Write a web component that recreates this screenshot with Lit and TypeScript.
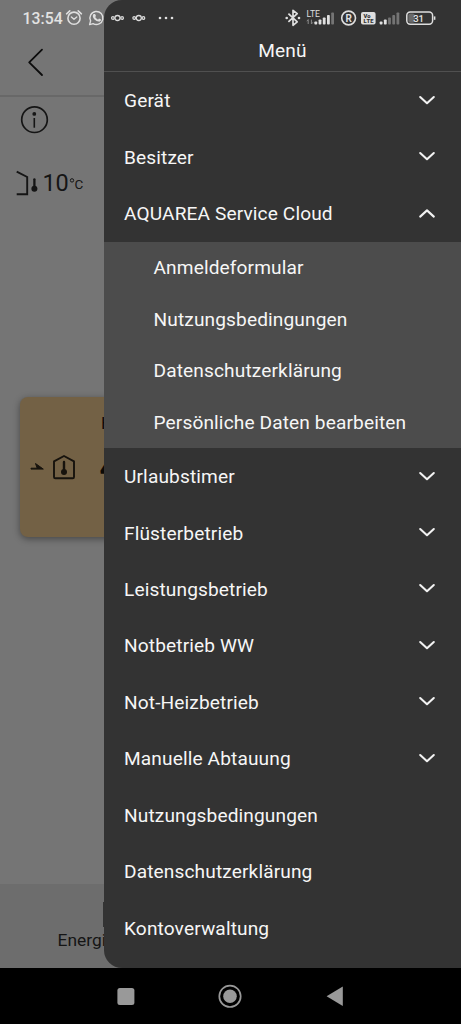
import { LitElement, html, svg, css } from "lit";
import { customElement, property } from "lit/decorators.js";

interface Entry {
  label: string;
  chevron?: "down" | "up";
  children?: string[];
}

const ENTRIES: Entry[] = [
  { label: "Gerät", chevron: "down" },
  { label: "Besitzer", chevron: "down" },
  {
    label: "AQUAREA Service Cloud",
    chevron: "up",
    children: ["Anmeldeformular", "Nutzungsbedingungen", "Datenschutzerklärung", "Persönliche Daten bearbeiten"],
  },
  { label: "Urlaubstimer", chevron: "down" },
  { label: "Flüsterbetrieb", chevron: "down" },
  { label: "Leistungsbetrieb", chevron: "down" },
  { label: "Notbetrieb WW", chevron: "down" },
  { label: "Not-Heizbetrieb", chevron: "down" },
  { label: "Manuelle Abtauung", chevron: "down" },
  { label: "Nutzungsbedingungen" },
  { label: "Datenschutzerklärung" },
  { label: "Kontoverwaltung" },
];

@customElement("status-bar")
export class StatusBar extends LitElement {
  static styles = css`
    :host { display: flex; height: 36px; }
    svg { display: block; width: 461px; height: 36px; font-family: Roboto, sans-serif; }
    .clock { font-size: 16.3px; font-weight: 500; fill: #e2e2e2; }
    .tiny { font-size: 8.8px; fill: #dedede; }
    .reg { font-size: 10px; font-weight: 700; fill: #dedede; }
    .volte { font-size: 5.8px; font-weight: 900; fill: #333; }
    .charge { font-size: 9.5px; font-weight: 500; fill: #e4e4e4; }
  `;

  private knot(x: number) {
    return svg`<g transform="translate(${x} 18)" fill="none" stroke="#dadada" stroke-width="1.3">
      <circle r="2.5"/><circle cx="-4.6" r="1.3"/><circle cx="4.6" r="1.3"/></g>`;
  }

  private bars(x: number, lit: number) {
    const heights = [3, 5, 7, 9.4, 12];
    return heights.map(
      (h, i) => svg`<rect x=${x + i * 4.2} y=${24.5 - h} width="2.8" height=${h} rx=".8" fill=${i < lit ? "#e0e0e0" : "#747474"}/>`
    );
  }

  render() {
    return html`<svg viewBox="0 0 461 36">
      <text class="clock" x="22.6" y="24" textLength="40" lengthAdjust="spacingAndGlyphs">13:54</text>
      <g fill="none" stroke="#dedede" stroke-width="1.6" stroke-linecap="round" stroke-linejoin="round">
        <circle cx="74" cy="18.2" r="6.1"/>
        <path d="M66.6 13.8l3.2-3M81.4 13.8l-3.2-3"/>
        <path d="M71.4 17l2.6 2.3 2.8-2.3" stroke-width="1.4"/>
        <path d="M89.6 24.6l1-3.7a6.5 6.5 0 1 1 2.5 2.7z" stroke-width="1.4"/>
      </g>
      <path d="M93.6 14.1l1.5-.2.9 2.1-.8 1.1c.7 1.3 1.5 2 2.8 2.6l1-1.1 2.1 1c0 1.5-1.4 2.2-2.4 2-3-.5-5.5-3-5.9-5.4 0-.8.2-1.5.8-2.1z" fill="#dedede"/>
      ${this.knot(117.5)}${this.knot(138.8)}
      <g fill="#e0e0e0"><circle cx="160" cy="18" r="1.3"/><circle cx="166" cy="18" r="1.3"/><circle cx="172" cy="18" r="1.3"/></g>
      <path d="M288.4 13.7l8.8 8.2-4.2 3.4V10.3l4.2 3.4-8.8 8.2" fill="none" stroke="#e0e0e0" stroke-width="1.7" stroke-linejoin="round"/>
      <circle cx="286.7" cy="18" r="1.3" fill="#e0e0e0"/><circle cx="299" cy="18" r="1.3" fill="#e0e0e0"/>
      <text class="tiny" x="306.4" y="16.9" textLength="13.6" lengthAdjust="spacingAndGlyphs">LTE</text>
      <path d="M308.2 24v-4.4m-1.4 1.6l1.4-1.6M311.4 19.6V24m1.4-1.6L311.4 24" fill="none" stroke="#8b8b8b" stroke-width="1"/>
      ${this.bars(314.4, 4)}
      <circle cx="348.6" cy="18" r="6.9" fill="none" stroke="#dedede" stroke-width="1.6"/>
      <text class="reg" x="348.7" y="21.6" text-anchor="middle">R</text>
      <rect x="361" y="12" width="14.6" height="12.6" rx="2" fill="#dedede"/>
      <text class="volte" x="363.6" y="17.9">Vo</text>
      <text class="volte" x="363.6" y="23.3" textLength="10">LTE</text>
      ${this.bars(379.7, 2)}
      <rect x="408.3" y="13.4" width="6.5" height="9.4" rx="2" fill="#686868"/>
      <rect x="406.8" y="12" width="25.8" height="12.2" rx="3.4" fill="none" stroke="#dedede" stroke-width="1.5"/>
      <path d="M434.6 16.4v3.4" stroke="#dedede" stroke-width="1.6"/>
      <text class="charge" x="418.6" y="21.5" text-anchor="middle">31</text>
    </svg>`;
  }
}

@customElement("menu-row")
export class MenuRow extends LitElement {
  @property() label = "";
  @property() chevron = "";

  static styles = css`
    :host { display: flex; align-items: center; justify-content: space-between; box-sizing: border-box; height: 56.45px; padding: 1.6px 25px 0 20px; }
    svg { display: block; width: 18px; height: 12px; margin-top: -1px; }
    .glyph { fill: none; stroke: #f2f2f2; stroke-width: 2.1; stroke-linecap: round; stroke-linejoin: round; }
  `;

  render() {
    return html`<span>${this.label}</span>
      ${this.chevron
        ? html`<svg viewBox="0 0 18 12"><path class="glyph" d=${this.chevron === "up" ? "M2.2 8.600l6.800-6.200 6.800 6.200" : "M2.2 2l6.800 6.200 6.800-6.200"} /></svg>`
        : ""}`;
  }
}

@customElement("side-menu")
export class SideMenu extends LitElement {
  static styles = css`
    :host {
      display: flex; flex-direction: column; box-sizing: border-box; overflow: hidden;
      background: #333; color: #f6f6f6; border-radius: 18px 0 0 18px;
      font: 400 19.1px/24px Roboto, sans-serif; letter-spacing: .13px; white-space: nowrap;
    }
    .title { box-sizing: border-box; height: 72.4px; padding-top: 38.6px; text-align: center; border-bottom: 1px solid #505050; }
    .group { background: #4c4c4c; }
    .sub { display: flex; align-items: center; box-sizing: border-box; height: 51.6px; padding: 1.3px 0 0 49.5px; }
  `;

  render() {
    return html`<div class="title">Menü</div>
      ${ENTRIES.map(
        (e) => html`<menu-row .label=${e.label} .chevron=${e.chevron ?? ""}></menu-row>
          ${e.children ? html`<div class="group">${e.children.map((c) => html`<div class="sub">${c}</div>`)}</div>` : ""}`
      )}`;
  }
}

@customElement("device-page")
export class DevicePage extends LitElement {
  static styles = css`
    :host { display: flex; flex-direction: column; overflow: hidden; background: #757575; color: #151515; font-family: Roboto, sans-serif; }
    svg { display: block; flex: none; }
    .top { box-sizing: border-box; height: 97px; padding: 48px 0 0 27px; border-bottom: 2px solid #686868; }
    .info { padding: 8px 0 0 20px; }
    .outdoor { display: flex; align-items: center; height: 30px; margin-top: 34px; padding-left: 16px; }
    .degrees { margin-left: 3.5px; font-size: 23.5px; line-height: 30px; letter-spacing: -.2px; }
    .unit { display: flex; align-items: center; font-size: 13.5px; line-height: 30px; padding-top: 2px; }
    .card {
      display: flex; box-sizing: border-box; width: 300px; height: 140px; margin: 199px 0 0 20px; padding: 0 0 0 10px;
      background: #736145; border-radius: 8px; box-shadow: 0 2px 7px rgba(0, 0, 0, .4);
    }
    .symbols { padding-top: 56px; }
    .values { padding: 15px 0 0 23.5px; color: #0c0a07; }
    .mode { font-size: 17px; line-height: 22px; padding-left: 1.6px; }
    .temp { font-size: 30px; font-weight: 900; line-height: 32px; padding-top: 18px; }
    .tabs { box-sizing: border-box; height: 84px; margin-top: auto; padding: 18px 0 0 57.5px; background: #6d6d6d; }
    .mark { width: 30px; height: 25px; margin-left: 45.5px; background: #333; }
    .tab { font-size: 17.4px; line-height: 22px; padding-top: 2px; }
  `;

  render() {
    return html`
      <div class="top">
        <svg width="18" height="30" viewBox="0 0 18 30"><path d="M15 1.6L2.2 14.4 15 27" fill="none" stroke="#0c0c0c" stroke-width="1.8" stroke-linecap="round" stroke-linejoin="round" /></svg>
      </div>
      <div class="info">
        <svg width="29" height="29" viewBox="0 0 29 29">
          <circle cx="14.5" cy="14.7" r="12.8" fill="none" stroke="#151515" stroke-width="1.7" />
          <circle cx="14.3" cy="8.9" r="1.9" fill="#151515" /><path d="M14.3 13v9.7" stroke="#151515" stroke-width="1.6" />
        </svg>
      </div>
      <div class="outdoor">
        <svg width="23" height="26" viewBox="0 0 23 26">
          <path d="M.7 1.7l10.500 5.300v17.200H.7" fill="none" stroke="#151515" stroke-width="1.9" />
          <path d="M18.400 9.3v10" stroke="#151515" stroke-width="2.300" stroke-linecap="round" /><circle cx="18.400" cy="18.800" r="3" fill="#151515" />
        </svg>
        <span class="degrees">10</span>
        <span class="unit">
          <svg width="6" height="14" viewBox="0 0 6 14"><circle cx="3" cy="3.4" r="1.700" fill="none" stroke="#151515" stroke-width="1" /></svg>
          C
        </span>
      </div>
      <div class="card">
        <div class="symbols">
          <svg width="46" height="30" viewBox="0 0 46 30">
            <path d="M1 16.100h12.300L5.500 10.500l1.700 4.700H1z" fill="#17130d" stroke="#17130d" stroke-width="1" stroke-linejoin="round" />
            <path d="M24 8.4L34 3l10 5.4V24q0 1.3-1.3 1.3H25.3Q24 25.300 24 24z" fill="none" stroke="#17130d" stroke-width="1.9" stroke-linejoin="round" />
            <path d="M34 9v11" stroke="#17130d" stroke-width="2.4" stroke-linecap="round" /><circle cx="34" cy="19" r="3" fill="#17130d" />
          </svg>
        </div>
        <div class="values"><div class="mode">H</div><div class="temp">4</div></div>
      </div>
      <div class="tabs"><div class="mark"></div><div class="tab">Energi</div></div>
    `;
  }
}

@customElement("app-root")
export class AppRoot extends LitElement {
  static styles = css`
    :host { display: flex; flex-direction: column; width: 461px; height: 1024px; overflow: hidden; background: #000; }
    .stage { position: relative; display: flex; flex-direction: column; height: 968px; overflow: hidden; }
    device-page { flex: 1; }
    side-menu { position: absolute; top: 0; right: 0; width: 357px; height: 968px; }
    status-bar { position: absolute; top: 0; left: 0; }
    .keys { display: flex; align-items: center; justify-content: center; height: 56px; gap: 83px; }
    .keys svg { display: block; width: 24px; height: 24px; }
    .keys .recent { margin-right: -2px; }
  `;

  render() {
    return html`
      <div class="stage"><device-page></device-page><side-menu></side-menu><status-bar></status-bar></div>
      <div class="keys">
        <svg class="recent" viewBox="0 0 24 24"><rect x="4.400" y="3.900" width="17" height="17" rx="2.500" fill="#999" /></svg>
        <svg viewBox="0 0 24 24"><circle cx="12" cy="12.3" r="10.700" fill="none" stroke="#999" stroke-width="1.700" /><circle cx="12" cy="12.300" r="6.800" fill="#999" /></svg>
        <svg viewBox="0 0 24 24"><path d="M17.800 2.500v19.600L1.600 12.300z" fill="#999" /></svg>
      </div>
    `;
  }
}
